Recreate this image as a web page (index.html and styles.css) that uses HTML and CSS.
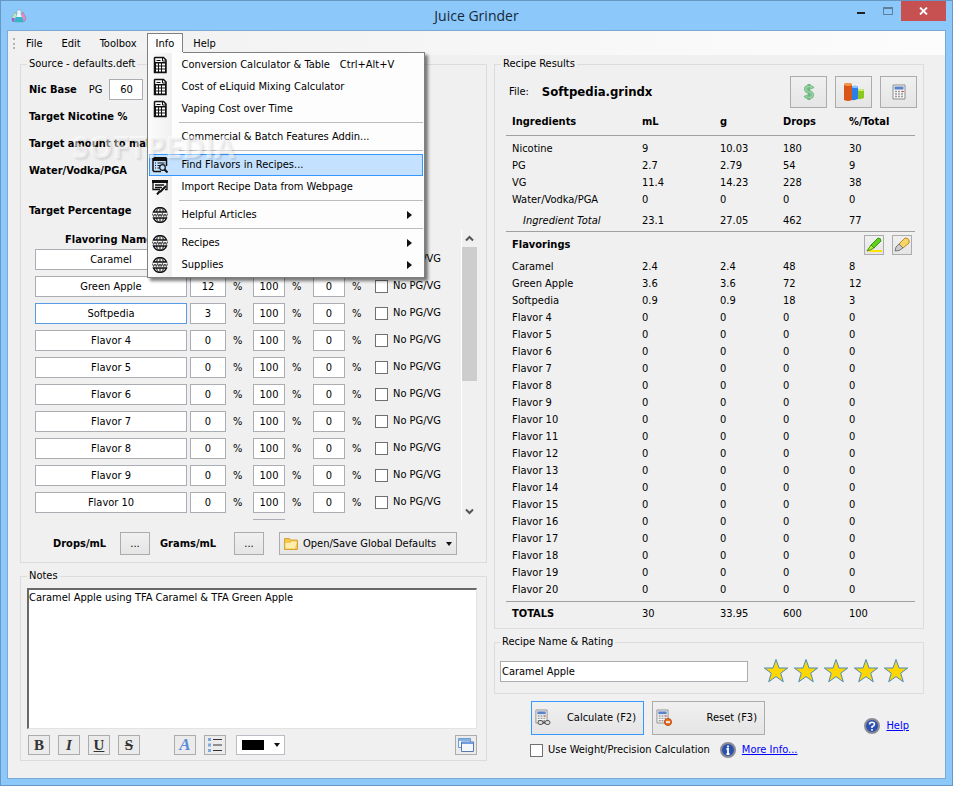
FILE: index.html
```html
<!DOCTYPE html>
<html lang="en">
<head>
    <meta charset="UTF-8">
    <meta name="viewport" content="width=device-width, initial-scale=1.0">
    <title>Juice Grinder</title>
    <link rel="stylesheet" href="styles.css">
</head>
<body>
    <!-- shared icons -->
    <svg class="sprite" aria-hidden="true">
        <symbol id="i-calc" viewBox="0 0 16 18">
            <path d="M3 1.500h8.500L14 4v12.500H2.500V2z" fill="#fff" stroke="#111" stroke-width="1.500"/>
            <path d="M10.500 2v3H14M4.500 4.500h4" fill="none" stroke="#111"/>
            <path d="M2 6h12v11H2z" fill="#111"/>
            <path d="M4 7.500h2v2H4zM7 7.500h2v2H7zM10 7.500h3v2h-3zM4 10.500h2v2H4zM7 10.500h2v2H7zM10 10.500h3v2h-3zM4 13.500h2v2H4zM7 13.500h2v2H7zM10 13.500h3v2h-3z" fill="#fff"/>
        </symbol>
        <symbol id="i-find" viewBox="0 0 16 16">
            <path d="M1.500.5h12l1 1V9M1 1v12.500l1 1h7" fill="none" stroke="#111" stroke-width="1.500"/>
            <path d="M1 1h13v3H1z" fill="#111"/>
            <path d="M3 6h1M5.500 6h7M3 8.500h1M5.500 8.500h3M3 11h1M5.500 11h2" stroke="#111" stroke-width="1.200"/>
            <circle cx="10.500" cy="10.500" r="2.800" fill="none" stroke="#111" stroke-width="1.200"/>
            <path d="M12.500 12.500l3 3" stroke="#111" stroke-width="2"/>
        </symbol>
        <symbol id="i-import" viewBox="0 0 16 16">
            <path d="M0 1h16v3H0z" fill="#111"/>
            <path d="M1 4v6.500h7M15 4v6.500h-2M3 6h9M3 8.500h7" fill="none" stroke="#111" stroke-width="1.300"/>
            <path d="M14 7l-6 6M8 12l-3 3.500" stroke="#111" stroke-width="2"/>
        </symbol>
        <symbol id="i-www" viewBox="0 0 16 16">
            <path d="M1.500 5a7 7 0 0 1 13 0zM1.500 11a7 7 0 0 0 13 0z" fill="#eee" stroke="#111" stroke-width="1.400"/>
            <path d="M8 1v4M8 11v4M4.500 5q.5-3 2-4M11.500 5q-.5-3-2-4M4.500 11q.5 3 2 4M11.500 11q-.5 3-2 4" fill="none" stroke="#111"/>
            <path d="M.3 6.500l1.300 3L3 7l1.300 2.500 1.300-3M5.600 6.500l1.200 3L8 7l1.200 2.500 1.200-3M10.400 6.500l1.300 3L13 7l1.300 2.500 1.400-3" fill="none" stroke="#111" stroke-width=".8"/>
        </symbol>
        <symbol id="i-arrow" viewBox="0 0 5 8"><path d="M0 0l5 4-5 4z" fill="#111"/></symbol>
        <symbol id="i-star" viewBox="0 0 26 26">
            <path d="M13 1.500l3 8.500h8.700l-7 5.200 2.600 8.600L13 18.600l-7.300 5.200 2.600-8.600L1.300 10H10z" fill="#ffd700" stroke="#4c8cbc"/>
        </symbol>
        <symbol id="i-calccolor" viewBox="0 0 14 16">
            <path d="M1 1h12v14H1z" fill="#f6f6f6" stroke="#8c8c8c"/>
            <path d="M2.500 2.500h9v3h-9z" fill="#5a82c8"/>
            <path d="M3 7.500h8M3 10h8M3 12.500h8" stroke="#9a9a9a" stroke-width="1.500" stroke-dasharray="2 1"/>
            <path d="M10 7h2v1h-2z" fill="#e05050"/>
        </symbol>
    </svg>

    <div class="window">
        <header class="titlebar">
            <svg class="app-icon" viewBox="0 0 16 16" aria-hidden="true">
                <path d="M1 9l3-5 3 4v5H1z" fill="#bfe6c8" stroke="#79a8a0" stroke-width=".6"/>
                <path d="M9 9l3-5 3 6-1 3H9z" fill="#e58ac8" stroke="#9a7aa8" stroke-width=".6"/>
                <path d="M6 2h4v4l3 8H3l3-8z" fill="#e9f6fb" stroke="#7fa6b8" stroke-width=".6"/>
                <path d="M5 9h6l2 5H3z" fill="#38b4c8"/>
                <path d="M1 10h3l-1 3.500H1z" fill="#9a62d0"/>
            </svg>
            <h1>Juice Grinder</h1>
            <div class="window-buttons">
                <button class="win-btn" aria-label="Minimize"><span class="min-mark"></span></button>
                <button class="win-btn" aria-label="Maximize"><span class="max-mark"></span></button>
                <button class="win-btn close" aria-label="Close">
                    <svg width="9" height="8" viewBox="0 0 9 8"><path d="M1 .5l7 7M8 .5l-7 7" stroke="#fff" stroke-width="1.800"/></svg>
                </button>
            </div>
        </header>

        <div class="client">
            <nav class="menubar">
                <span class="grip"></span>
                <button class="menu-item">File</button>
                <button class="menu-item">Edit</button>
                <button class="menu-item">Toolbox</button>
                <div class="menu-open">
                    <button class="menu-item active">Info</button>
                    <div class="dropdown">
                        <button class="entry"><svg class="tall"><use href="#i-calc"/></svg><span>Conversion Calculator &amp; Table</span><kbd>Ctrl+Alt+V</kbd></button>
                        <button class="entry"><svg class="tall"><use href="#i-calc"/></svg><span>Cost of eLiquid Mixing Calculator</span></button>
                        <button class="entry"><svg class="tall"><use href="#i-calc"/></svg><span>Vaping Cost over Time</span></button>
                        <hr>
                        <button class="entry"><svg></svg><span>Commercial &amp; Batch Features Addin...</span></button>
                        <hr>
                        <button class="entry selected"><svg><use href="#i-find"/></svg><span>Find Flavors in Recipes...</span></button>
                        <button class="entry"><svg><use href="#i-import"/></svg><span>Import Recipe Data from Webpage</span></button>
                        <hr>
                        <button class="entry"><svg><use href="#i-www"/></svg><span>Helpful Articles</span><svg class="more"><use href="#i-arrow"/></svg></button>
                        <hr>
                        <button class="entry"><svg><use href="#i-www"/></svg><span>Recipes</span><svg class="more"><use href="#i-arrow"/></svg></button>
                        <button class="entry"><svg><use href="#i-www"/></svg><span>Supplies</span><svg class="more"><use href="#i-arrow"/></svg></button>
                    </div>
                </div>
                <button class="menu-item">Help</button>
            </nav>

            <main>
                <div class="column">
                    <fieldset class="source">
                        <legend>Source - defaults.deft</legend>
                        <div class="setting">
                            <b>Nic Base</b>
                            <label for="nic-pg">PG</label>
                            <input type="text" id="nic-pg" class="box" value="60">
                        </div>
                        <div class="setting"><b>Target Nicotine %</b></div>
                        <div class="setting"><b>Target amount to make</b></div>
                        <div class="setting"><b>Water/Vodka/PGA</b></div>
                        <div class="setting target"><b>Target Percentage</b></div>

                        <div class="flavor-area">
                            <div class="flavor-list">
                                <div class="flavor-head"><b>Flavoring Name</b></div>
                                <div id="flavor-rows"></div>
                                <div class="flavor-row peek"><span></span></div>
                            </div>
                            <div class="scrollbar" aria-hidden="true">
                                <svg viewBox="0 0 15 17"><path d="M4 10.500l3.500-3.500 3.500 3.500" fill="none" stroke="#555" stroke-width="2"/></svg>
                                <div class="thumb"></div>
                                <svg viewBox="0 0 15 17"><path d="M4 6.500l3.500 3.500 3.500-3.500" fill="none" stroke="#555" stroke-width="2"/></svg>
                            </div>
                        </div>

                        <div class="source-footer">
                            <b class="drops-label">Drops/mL</b>
                            <button class="btn dots" aria-label="Edit drops per mL">...</button>
                            <b class="grams-label">Grams/mL</b>
                            <button class="btn dots" aria-label="Edit grams per mL">...</button>
                            <button class="btn defaults">
                                <svg width="14" height="12" viewBox="0 0 14 12"><path d="M.5 11.500v-11h5l1 1.500h7v9.500z" fill="#f3c64c" stroke="#d9a437"/><path d="M1.500 5h5l1-1.500h5V5L11 10.500H1.500z" fill="#fdeeb0"/></svg>
                                <span>Open/Save Global Defaults</span>
                                <i class="caret"></i>
                            </button>
                        </div>
                    </fieldset>

                    <fieldset class="notes">
                        <legend>Notes</legend>
                        <textarea aria-label="Notes" spellcheck="false">Caramel Apple using TFA Caramel &amp; TFA Green Apple</textarea>
                        <div class="toolbar">
                            <button class="tool"><b>B</b></button>
                            <button class="tool"><i>I</i></button>
                            <button class="tool"><u>U</u></button>
                            <button class="tool"><s>S</s></button>
                            <button class="tool font"><i>A</i></button>
                            <button class="tool" aria-label="Bullet list">
                                <svg width="14" height="14" viewBox="0 0 14 14"><path d="M0 0h3v3H0zM0 5.500h3v3H0zM0 11h3v3H0z" fill="#7fa8dc"/><path d="M5 1.500h9M5 7h9M5 12.500h9" stroke="#333"/></svg>
                            </button>
                            <button class="color-pick" aria-label="Text color"><span class="swatch"></span><i class="caret"></i></button>
                            <button class="tool popout" aria-label="Open in window">
                                <svg width="16" height="14" viewBox="0 0 16 14"><path d="M.5.5h12v9H.500z" fill="#f4f8fd" stroke="#6f9bd0"/><path d="M1 1h11v2H1z" fill="#86b2e4"/><path d="M3.500 4h12v9.500h-12z" fill="#f4f8fd" stroke="#5878b4"/><path d="M4 4h11v2H4z" fill="#6f9fe0"/></svg>
                            </button>
                        </div>
                    </fieldset>
                </div>

                <div class="column">
                    <fieldset class="results">
                        <legend>Recipe Results</legend>
                        <div class="file-row">
                            <span>File:</span>
                            <strong>Softpedia.grindx</strong>
                            <button class="btn big" aria-label="Cost">
                                <svg width="12" height="18" viewBox="0 0 12 18"><path d="M10 5.500Q9 3.500 6 3.500 2.500 3.500 2.500 6T6 9t3.500 3T6 14.500Q3 14.500 2 12.500M6 1v16" fill="none" stroke="#6fb583" stroke-width="3"/><path d="M10 5.500Q9 3.500 6 3.500 2.500 3.500 2.500 6T6 9t3.500 3T6 14.500Q3 14.500 2 12.500" fill="none" stroke="#98d3a2" stroke-width="1.500"/></svg>
                            </button>
                            <button class="btn big" aria-label="Chart">
                                <svg width="22" height="20" viewBox="0 0 22 20"><path d="M1 2q4-2 8 0v16q-4 2-8 0z" fill="#d9561b"/><path d="M1 2q4-2 8 0v1q-4 2-8 0z" fill="#f39a4e"/><path d="M9 4.500q3-1.500 6 0V17q-3 1.500-6 1z" fill="#2c7fe8"/><path d="M9 4.500q3-1.500 6 0v1q-3 1-6 0z" fill="#86c2ff"/><path d="M15 7.500q3-1 6 0V16q-3 1.500-6 1z" fill="#8cc820"/><path d="M15 7.500q3-1 6 0v1q-3 1-6 0z" fill="#cdf07a"/></svg>
                            </button>
                            <button class="btn big" aria-label="Calculator"><svg width="14" height="16"><use href="#i-calccolor"/></svg></button>
                        </div>
                        <table>
                            <colgroup><col><col class="c-ml"><col class="c-g"><col class="c-drops"><col class="c-total"></colgroup>
                            <thead>
                                <tr><th>Ingredients</th><th>mL</th><th>g</th><th>Drops</th><th>%/Total</th></tr>
                            </thead>
                            <tbody class="ingredients">
                                <tr><td>Nicotine</td><td>9</td><td>10.03</td><td>180</td><td>30</td></tr>
                                <tr><td>PG</td><td>2.7</td><td>2.79</td><td>54</td><td>9</td></tr>
                                <tr><td>VG</td><td>11.4</td><td>14.23</td><td>228</td><td>38</td></tr>
                                <tr><td>Water/Vodka/PGA</td><td>0</td><td>0</td><td>0</td><td>0</td></tr>
                                <tr class="subtotal"><td><em>Ingredient Total</em></td><td>23.1</td><td>27.05</td><td>462</td><td>77</td></tr>
                            </tbody>
                            <tbody>
                                <tr class="flavor-title">
                                    <th colspan="4">Flavorings</th>
                                    <td class="markers">
                                        <div>
                                            <button class="btn marker" aria-label="Highlight">
                                                <svg width="16" height="16" viewBox="0 0 16 16"><path d="M3 14h13" stroke="#ffe000" stroke-width="2"/><path d="M5 8l7-7q3 0 3 3l-7 7z" fill="#5fd01c" stroke="#3a9414"/><path d="M5 8l3 3-3 1.500-4 1.500 2-3z" fill="#c6e830" stroke="#3a9414"/></svg>
                                            </button>
                                            <button class="btn marker" aria-label="Clear highlight">
                                                <svg width="16" height="16" viewBox="0 0 16 16"><path d="M5 7l6-6q5 0 4 5l-6 5z" fill="#f6d565" stroke="#b98a24"/><path d="M5 7l4 4-4 2.500-4 .5 1-4z" fill="#ccc" stroke="#777"/></svg>
                                            </button>
                                        </div>
                                    </td>
                                </tr>
                            </tbody>
                            <tbody class="flavors" id="result-rows"></tbody>
                            <tfoot>
                                <tr><th>TOTALS</th><td>30</td><td>33.95</td><td>600</td><td>100</td></tr>
                            </tfoot>
                        </table>
                    </fieldset>

                    <fieldset class="rating">
                        <legend>Recipe Name &amp; Rating</legend>
                        <div class="rating-row">
                            <input type="text" class="box" aria-label="Recipe name" value="Caramel Apple">
                            <div class="stars" role="img" aria-label="5 stars">
                                <svg><use href="#i-star"/></svg>
                                <svg><use href="#i-star"/></svg>
                                <svg><use href="#i-star"/></svg>
                                <svg><use href="#i-star"/></svg>
                                <svg><use href="#i-star"/></svg>
                            </div>
                        </div>
                    </fieldset>

                    <div class="actions">
                        <button class="btn action primary">
                            <svg width="17" height="18" viewBox="0 0 17 18"><use href="#i-calccolor" width="13" height="15"/><path d="M4 13.500h10" stroke="#555" stroke-width="2"/><rect x="3" y="11.500" width="5" height="4" rx="2" fill="#ddd" stroke="#555"/><rect x="10" y="11.500" width="5" height="4" rx="2" fill="#ddd" stroke="#555"/></svg>
                            <span>Calculate (F2)</span>
                        </button>
                        <button class="btn action">
                            <svg width="17" height="18" viewBox="0 0 17 18"><use href="#i-calccolor" width="13" height="15"/><circle cx="12" cy="13" r="3.500" fill="#e8742a" stroke="#b84c10"/><path d="M10 13h4" stroke="#fff" stroke-width="1.500"/></svg>
                            <span>Reset (F3)</span>
                        </button>
                        <a href="#help" class="help">
                            <svg width="16" height="16" viewBox="0 0 16 16"><circle cx="8" cy="8" r="7" fill="#2c50b0" stroke="#8c8c94" stroke-width="2"/><path d="M5.500 6.500Q5.500 4.200 8 4.200t2.500 2Q10.500 7.500 8 8.800V10M8 11v1.800" fill="none" stroke="#fff" stroke-width="1.600"/></svg>
                            <span>Help</span>
                        </a>
                    </div>
                    <div class="options">
                        <label class="precision"><input type="checkbox"> Use Weight/Precision Calculation</label>
                        <a href="#info">
                            <svg width="16" height="16" viewBox="0 0 16 16"><circle cx="8" cy="8" r="7" fill="#2c50b0" stroke="#8c8c94" stroke-width="2"/><path d="M8 3.500v2M6.500 7H8v5M6.500 12h3" fill="none" stroke="#fff" stroke-width="1.800"/></svg>
                            <span>More Info...</span>
                        </a>
                    </div>
                </div>
            </main>
            <div class="watermark">SOFTPEDIA</div>
        </div>
    </div>
    <script src="script.js"></script>
</body>
</html>
```
FILE: styles.css
```css
* {
    box-sizing: border-box;
}

body {
    margin: 0;
    background-color: #8cc8fa;
    color: #000;
    font-family: "DejaVu Sans Condensed", "Noto Sans", sans-serif;
    font-size: 11px;
    line-height: 14px;
}

button, input, textarea {
    font: inherit;
    color: inherit;
    margin: 0;
    padding: 0;
}

button {
    white-space: nowrap;
}

svg {
    display: block;
    flex: none;
}

.sprite {
    display: none;
}

/* window frame */
.window {
    min-height: 100vh;
    display: flex;
    flex-direction: column;
    padding: 0 6px 6px;
    border: 1px solid #6797c4;
    background-color: #8cc8fa;
}

.titlebar {
    height: 29px;
    display: grid;
    grid-template-columns: 1fr auto 1fr;
    align-items: center;
}

.titlebar h1 {
    margin: 0;
    color: #16283a;
    font-family: "Open Sans", "Noto Sans", sans-serif;
    font-size: 14px;
    font-weight: normal;
    line-height: 20px;
}

.app-icon {
    width: 16px;
    height: 16px;
    margin-left: 4px;
}

.window-buttons {
    display: flex;
    justify-content: flex-end;
    align-self: start;
}

.win-btn {
    width: 27px;
    height: 20px;
    display: flex;
    justify-content: center;
    align-items: center;
    border: none;
    background: none;
}

.win-btn.close {
    width: 45px;
    background-color: #c75050;
}

.min-mark {
    width: 8px;
    height: 2px;
    margin-top: 4px;
    background-color: #222;
}

.max-mark {
    width: 10px;
    height: 8px;
    border: 1px solid #5f7f9c;
    border-top-width: 2px;
}

.client {
    position: relative;
    flex: 1;
    border: 1px solid #7aa9d6;
    background-color: #f0f0f0;
}

/* menu */
.menubar {
    height: 24px;
    display: flex;
    align-items: center;
    gap: 1px;
    padding-left: 5px;
    background: linear-gradient(to right, #f0f0f0, #fcfcfc);
}

.grip {
    width: 3px;
    height: 11px;
    border-left: 2px dotted #b4b4b4;
}

.menu-item {
    height: 20px;
    padding: 0 8px;
    border: 1px solid transparent;
    border-bottom: none;
    background: none;
}

.menu-item.active {
    border-color: #808080;
    background-color: #fcfcfc;
}

.menu-open {
    position: relative;
}

.dropdown {
    position: absolute;
    top: 19px;
    left: 0;
    z-index: 2;
    width: 278px;
    padding: 1px;
    border: 1px solid #808080;
    background: linear-gradient(to right, #fcfcfc, #f0f0f0 24px, #fdfdfd 24px);
    box-shadow: 3px 3px 3px rgba(0, 0, 0, 0.5);
}

/* hides the line between the open tab and its list */
.dropdown::before {
    content: "";
    position: absolute;
    top: -1px;
    left: 0;
    width: 35px;
    height: 1px;
    background-color: #fcfcfc;
}

.entry {
    width: 100%;
    height: 22px;
    display: flex;
    align-items: center;
    padding: 0 10px 0 2px;
    border: 1px solid transparent;
    background: none;
}

.entry.selected {
    border-color: #3399ff;
    background-color: #c4e1ff;
}

.entry svg {
    width: 16px;
    height: 16px;
    margin-right: 14px;
}

.entry svg.tall {
    height: 18px;
}

.entry kbd {
    margin-left: 10px;
    font: inherit;
}

.entry svg.more {
    width: 5px;
    height: 8px;
    margin: 0 0 0 auto;
}

.dropdown hr {
    height: 1px;
    margin: 2px 0 3px 30px;
    border: none;
    background-color: #bdbdbd;
}

/* groups */
main {
    display: grid;
    grid-template-columns: minmax(0, 467fr) minmax(0, 430fr);
    align-items: start;
    gap: 7px;
    padding: 2px 21px 17px 12px;
}

.column {
    display: flex;
    flex-direction: column;
    gap: 6px;
}

fieldset {
    min-width: 0;
    margin: 0;
    padding: 0 6px;
    border: 1px solid #dcdcdc;
}

legend {
    padding: 0 2px;
}

.box {
    height: 21px;
    border: 1px solid #abadb3;
    background-color: #fff;
    text-align: center;
}

.btn {
    display: flex;
    align-items: center;
    justify-content: center;
    border: 1px solid #acacac;
    background: linear-gradient(#f0f0f0, #e5e5e5);
}

.caret {
    border: 3px solid transparent;
    border-top: 4px solid #111;
    border-bottom: none;
}

/* source */
.source {
    padding-bottom: 7px;
}

.setting {
    height: 27px;
    display: flex;
    align-items: center;
    padding-left: 2px;
}

.setting:first-of-type {
    height: 32px;
    padding-top: 5px;
}

.setting b {
    white-space: nowrap;
}

.setting label {
    margin: 0 7px 0 12px;
}

.setting .box {
    width: 34px;
}

.setting.target {
    margin: 13px 0 6px;
}

.flavor-area {
    display: flex;
    justify-content: space-between;
}

.flavor-head {
    height: 19px;
    padding: 3px 0 0 30px;
}

.flavor-list {
    padding-left: 8px;
}

.flavor-row {
    height: 27px;
    display: grid;
    grid-template-columns: 152px 39px 27px 32px 28px 32px 30px 80px;
    align-items: start;
}

.flavor-row .box {
    width: 100%;
}

.flavor-row .amount {
    width: auto;
    min-width: 0;
    margin-left: 3px;
}

.flavor-row span {
    padding: 4px 0 0 7px;
}

.flavor-row label {
    display: flex;
    align-items: center;
    gap: 5px;
    padding-top: 3px;
    white-space: nowrap;
}

.flavor-row .focused {
    border-color: #569de5;
}

.flavor-row.peek {
    height: 1px;
}

.flavor-row.peek span {
    grid-column: 4;
    padding: 0;
    height: 1px;
    background-color: #abadb3;
}

input[type="checkbox"] {
    appearance: none;
    width: 13px;
    height: 13px;
    flex: none;
    border: 1px solid #707070;
    background-color: #fff;
}

.scrollbar {
    width: 16px;
    display: flex;
    flex-direction: column;
    margin-right: 3px;
    border-left: 1px solid #fff;
}

.scrollbar svg {
    width: 15px;
    height: 17px;
}

.scrollbar .thumb {
    height: 134px;
    margin-bottom: auto;
    background-color: #cdcdcd;
}

.source-footer {
    display: flex;
    align-items: center;
    margin-top: 12px;
    padding-left: 26px;
}

.drops-label {
    width: 67px;
}

.grams-label {
    width: 74px;
    margin-left: 10px;
}

.dots {
    width: 30px;
    height: 23px;
}

.defaults {
    width: 178px;
    height: 23px;
    justify-content: flex-start;
    gap: 5px;
    margin-left: 15px;
    padding: 0 4px;
}

.defaults .caret {
    margin-left: auto;
}

/* notes */
.notes {
    padding-bottom: 5px;
}

.notes textarea {
    display: block;
    width: calc(100% - 3px);
    height: 141px;
    margin-top: 5px;
    padding: 1px 0;
    border: 1px solid #e3e3e3;
    border-top: 2px solid #696969;
    border-left: 2px solid #696969;
    border-radius: 0;
    background-color: #fff;
    outline: none;
    resize: none;
}

.toolbar {
    display: flex;
    gap: 8px;
    margin-top: 6px;
    padding: 0 3px 0 1px;
}

.tool {
    width: 22px;
    height: 20px;
    display: flex;
    align-items: center;
    justify-content: center;
    border: 1px solid #acacac;
    background-color: #ebebeb;
    color: #333;
    font-family: "Liberation Serif", serif;
    font-size: 15px;
    font-weight: bold;
    line-height: 16px;
}

.tool.font {
    margin-left: 26px;
    color: #5b8ad6;
    font-size: 17px;
}

.color-pick {
    width: 49px;
    height: 20px;
    display: flex;
    align-items: center;
    justify-content: space-between;
    margin-left: 2px;
    padding: 0 4px 0 5px;
    border: 1px solid #bcbcc4;
    background-color: #fff;
}

.swatch {
    width: 22px;
    height: 10px;
    background-color: #000;
}

.popout {
    margin-left: auto;
}

/* results */
.file-row {
    display: flex;
    align-items: center;
    gap: 8px;
    margin-top: 5px;
    padding-left: 8px;
}

.file-row strong {
    flex: 1;
    margin-left: 5px;
    font-size: 13px;
}

.big {
    width: 37px;
    height: 32px;
}

table {
    width: calc(100% - 7px);
    margin: 0 2px 2px 5px;
    border-spacing: 0;
    table-layout: fixed;
}

.c-ml {
    width: 78px;
}

.c-g {
    width: 63px;
}

.c-drops, .c-total {
    width: 66px;
}

th, td {
    height: 17px;
    padding: 0;
    text-align: left;
    white-space: nowrap;
}

th:first-child, td:first-child {
    padding-left: 6px;
}

thead th {
    height: 28px;
    border-bottom: 1px solid #a0a0a0;
}

.ingredients tr:first-child td {
    height: 21px;
    padding-top: 4px;
}

.subtotal td {
    height: 24px;
    padding-top: 3px;
    border-bottom: 1px solid #a0a0a0;
}

.subtotal em {
    padding-left: 11px;
}

.flavor-title th, .flavor-title td {
    height: 26px;
}

.markers div {
    display: flex;
    justify-content: flex-end;
    gap: 8px;
    padding-right: 3px;
}

.marker {
    width: 20px;
    height: 20px;
}

.flavors tr:last-child td {
    height: 21px;
    padding-bottom: 3px;
    border-bottom: 1px solid #a0a0a0;
}

tfoot th, tfoot td {
    height: 24px;
}

/* rating */
.rating {
    padding: 0 5px 11px;
}

.rating-row {
    display: flex;
    align-items: center;
    margin-top: 12px;
}

.rating-row .box {
    flex: 1;
    min-width: 0;
    padding: 0 1px;
    text-align: left;
}

.stars {
    display: flex;
    gap: 4px;
    margin: 0 9px 0 15px;
}

.stars svg {
    width: 26px;
    height: 26px;
    margin: -4px 0 -2px;
}

/* actions */
.actions {
    display: flex;
    gap: 8px;
    padding: 1px 15px 0 37px;
}

.action {
    width: 113px;
    height: 34px;
    justify-content: space-between;
    padding: 0 7px 0 3px;
}

.action.primary {
    border-color: #3399ff;
}

a {
    display: flex;
    align-items: center;
    gap: 6px;
    color: #0000ff;
    text-decoration: none;
}

a span {
    text-decoration: underline;
}

.help {
    margin: 15px 0 0 auto;
}

.options {
    display: flex;
    align-items: center;
    gap: 10px;
    margin-top: 1px;
    padding-left: 36px;
}

.precision {
    display: flex;
    align-items: center;
    gap: 5px;
    white-space: nowrap;
}

.watermark {
    position: absolute;
    top: 98px;
    left: 64px;
    z-index: 3;
    color: rgba(255, 255, 255, 0.5);
    font-family: "Open Sans", sans-serif;
    font-size: 30px;
    font-weight: bold;
    line-height: 36px;
    text-shadow: 2px 2px 2px rgba(0, 0, 0, 0.1);
    pointer-events: none;
}
```
FILE: script.js
```js
const recipe = [
    ['Caramel', 8, '2.4', '2.4', 48],
    ['Green Apple', 12, '3.6', '3.6', 72],
    ['Softpedia', 3, '0.9', '0.9', 18]
];
for (let i = 4; i <= 20; i++) {
    recipe.push([`Flavor ${i}`, 0, '0', '0', 0]);
}

document.getElementById('flavor-rows').innerHTML = recipe.slice(0, 10).map(([name, percent], i) => `
    <div class="flavor-row">
        <input type="text" class="box${i === 2 ? ' focused' : ''}" aria-label="Flavor name" value="${name}">
        <input type="text" class="box amount" aria-label="Percent" value="${percent}">
        <span>%</span>
        <input type="text" class="box" aria-label="PG" value="100">
        <span>%</span>
        <input type="text" class="box" aria-label="VG" value="0">
        <span>%</span>
        <label><input type="checkbox"> No PG/VG</label>
    </div>`).join('');

document.getElementById('result-rows').innerHTML = recipe.map(([name, percent, ml, g, drops]) =>
    `<tr><td>${name}</td><td>${ml}</td><td>${g}</td><td>${drops}</td><td>${percent}</td></tr>`
).join('');
```
